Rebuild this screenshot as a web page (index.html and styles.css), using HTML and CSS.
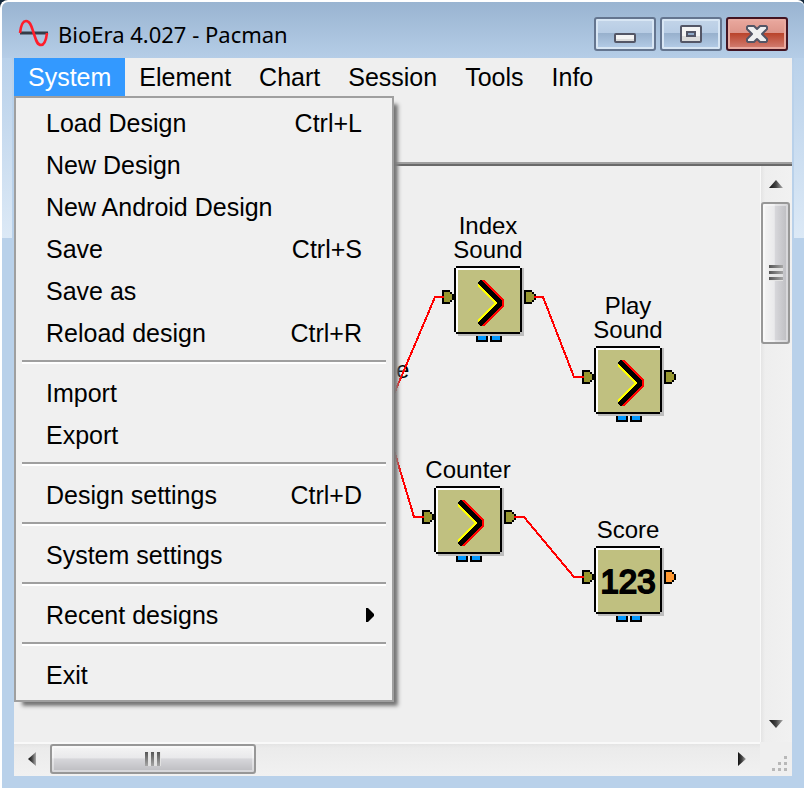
FILE: index.html
```html
<!DOCTYPE html>
<html lang="en">
<head>
<meta charset="utf-8">
<title>BioEra 4.027 - Pacman</title>
<link rel="stylesheet" href="styles.css">
</head>
<body>
<div class="window">
  <header class="titlebar">
    <svg class="logo" viewBox="0 0 32 30" aria-hidden="true">
      <path d="M2 14H30" stroke="#343c48" stroke-width="3"/>
      <path d="M2 14C3 5 5 2 8 2C13 2 14 10 16 15C18 21 19 26 23 26C26 26 28 22 29 14" fill="none" stroke="#ff1d2b" stroke-width="2.6"/>
    </svg>
    <h1 class="title">BioEra 4.027 - Pacman</h1>
    <div class="caption-buttons">
      <button class="caption" aria-label="Minimize">
        <svg viewBox="0 0 58 30"><rect x="19" y="15" width="20" height="8" rx="1" fill="#f4f4f4" stroke="#535666" stroke-width="2"/><path d="M20 20H38V22H20Z" fill="#dcdcdc"/></svg>
      </button>
      <button class="caption" aria-label="Maximize">
        <svg viewBox="0 0 58 30"><rect x="19" y="7" width="20" height="16" rx="1" fill="#f4f4f4" stroke="#535666" stroke-width="2"/><path d="M20 17H38V22H20Z" fill="#dcdcdc"/><rect x="25" y="13" width="8" height="4" fill="#8fa9c8" stroke="#535666" stroke-width="2"/></svg>
      </button>
      <button class="caption close" aria-label="Close">
        <svg viewBox="0 0 58 30"><path d="M20 7H26L29 10L32 7H38L39 8V10L34 15L39 20V22L38 23H32L29 20L26 23H20L19 22V20L24 15L19 10V8Z" fill="#f0f0f0" stroke="#535666" stroke-width="2" stroke-linejoin="round"/></svg>
      </button>
    </div>
  </header>

  <main class="client">
    <nav class="menubar">
      <div class="menu-holder">
        <button class="menu-title active" aria-expanded="true">System</button>
        <div class="menu">
          <button class="item"><span>Load Design</span><span>Ctrl+L</span></button>
          <button class="item"><span>New Design</span></button>
          <button class="item"><span>New Android Design</span></button>
          <button class="item"><span>Save</span><span>Ctrl+S</span></button>
          <button class="item"><span>Save as</span></button>
          <button class="item"><span>Reload design</span><span>Ctrl+R</span></button>
          <hr>
          <button class="item"><span>Import</span></button>
          <button class="item"><span>Export</span></button>
          <hr>
          <button class="item"><span>Design settings</span><span>Ctrl+D</span></button>
          <hr>
          <button class="item"><span>System settings</span></button>
          <hr>
          <button class="item submenu"><span>Recent designs</span><svg class="sub-arrow" viewBox="0 0 8 14"><path d="M0 0H2L8 6V8L2 14H0Z"/></svg></button>
          <hr>
          <button class="item"><span>Exit</span></button>
        </div>
      </div>
      <button class="menu-title">Element</button>
      <button class="menu-title">Chart</button>
      <button class="menu-title">Session</button>
      <button class="menu-title">Tools</button>
      <button class="menu-title">Info</button>
    </nav>
    <div class="toolbar"></div>

    <div class="workspace">
      <section class="canvas">
        <svg class="defs" aria-hidden="true">
          <defs>
            <g id="block" shape-rendering="crispEdges">
              <path d="M18 2H84V70H18Z" fill="#bdbdbd"/>
              <path d="M16 0H80V2H82V66H80V68H16V66H14V2H16Z" fill="#000"/>
              <path d="M16 2H80V66H16Z" fill="#fff"/>
              <path d="M18 4H80V66H18Z" fill="#c0c080"/>
              <path d="M36 70H48V76H36ZM50 70H62V76H50Z" fill="#000"/>
              <path d="M38 70H46V74H38ZM52 70H60V74H52Z" fill="#0098ff"/>
              <path d="M2 24H10V26H12V28H14V34H12V36H10V38H2Z" fill="#000"/>
              <path d="M4 26H10V28H12V34H10V36H4Z" fill="#989830"/>
              <path d="M84 24H92V26H94V28H96V34H94V36H92V38H84Z" fill="#000"/>
            </g>
            <path id="port" shape-rendering="crispEdges" d="M86 26H92V28H94V34H92V36H86Z"/>
            <g id="chevron" shape-rendering="crispEdges">
              <path d="M42 14H44L64 34V40L44 60H42L58 40V34Z" fill="#f00"/>
              <path d="M38 17V21L54 37L38 53V57L59 37Z" fill="#ff0"/>
              <path d="M40 14H42L62 35V39L42 60H40L38 58V56L57 37L38 18V16Z" fill="#000"/>
            </g>
          </defs>
        </svg>
        <span class="node-label hidden-end">e</span>
        <svg class="wires" aria-hidden="true">
          <path d="M430 131H421L380 228M520 131H529L560 211H570M380 284L400 351H410M500 351H510L560 411H570"/>
        </svg>
        <div class="node index-sound"><span class="node-label">Index Sound</span><svg class="art" viewBox="0 0 96 78"><use href="#block"/><use href="#port" fill="#989830"/><use href="#chevron"/></svg></div>
        <div class="node play-sound"><span class="node-label">Play Sound</span><svg class="art" viewBox="0 0 96 78"><use href="#block"/><use href="#port" fill="#989830"/><use href="#chevron"/></svg></div>
        <div class="node counter"><span class="node-label">Counter</span><svg class="art" viewBox="0 0 96 78"><use href="#block"/><use href="#port" fill="#989830"/><use href="#chevron"/></svg></div>
        <div class="node score"><span class="node-label">Score</span><svg class="art" viewBox="0 0 96 78"><use href="#block"/><use href="#port" fill="#ff9830"/><text class="digits" x="48" y="47">123</text></svg></div>
        <svg class="wires" aria-hidden="true">
          <path d="M428 131H430M520 131H522M568 211H570M408 351H410M500 351H502M568 411H570"/>
        </svg>
      </section>

      <div class="scroll vertical">
        <button class="arrow" aria-label="Scroll up"><svg class="wide-arrow" viewBox="0 0 14 8"><path d="M0 8L7 0L14 8Z" fill="url(#fade)"/></svg></button>
        <div class="thumb"><span class="grip"></span></div>
        <button class="arrow end" aria-label="Scroll down"><svg class="wide-arrow" viewBox="0 0 14 8"><path d="M0 0H14L7 8Z" fill="url(#fade)"/></svg></button>
      </div>
      <div class="scroll horizontal">
        <button class="arrow" aria-label="Scroll left"><svg class="tall-arrow" viewBox="0 0 8 14"><path d="M8 0V14L0 7Z" fill="url(#fade)"/></svg></button>
        <div class="thumb"><span class="grip"></span></div>
        <button class="arrow end" aria-label="Scroll right"><svg class="tall-arrow" viewBox="0 0 8 14"><path d="M0 0L8 7L0 14Z" fill="url(#fade)"/></svg></button>
      </div>
      <div class="corner">
        <svg class="resize" viewBox="0 0 16 16" fill="#b8b8b8"><defs><linearGradient id="fade"><stop stop-color="#111"/><stop offset="0.5" stop-color="#444"/><stop offset="1" stop-color="#aaa"/></linearGradient></defs><path d="M12 0h3v3h-3zM6 6h3v3h-3zM12 6h3v3h-3zM0 12h3v3h-3zM6 12h3v3h-3zM12 12h3v3h-3z"/></svg>
      </div>
    </div>
  </main>
</div>
</body>
</html>
```
FILE: styles.css
```css
* {
  box-sizing: border-box;
}

body {
  margin: 0;
  background: #14283c;
  font-family: "Liberation Sans", Arial, sans-serif;
  color: #000;
}

button {
  margin: 0;
  padding: 0;
  border: 0;
  background: none;
  font: inherit;
  color: inherit;
}

svg {
  display: block;
}

.window {
  min-height: 100vh;
  display: flex;
  flex-direction: column;
  padding: 0 12px 12px;
  border: solid #fff;
  border-width: 2px 0 0 2px;
  border-radius: 8px 6px 0 0;
  background:
    linear-gradient(#b9d1ea, #dce9f6) left 56px / 10px 180px no-repeat,
    linear-gradient(#b9d1ea, #dce9f6) right 56px / 10px 180px no-repeat,
    linear-gradient(#99b4d1, #b9d1ea 64px);
  background-color: #b9d1ea;
}

.titlebar {
  height: 56px;
  display: flex;
  align-items: center;
  padding: 8px 4px 0;
}

.logo {
  width: 32px;
  height: 30px;
}

.title {
  flex: 1;
  margin: 0 8px;
  font: 22px/32px "Noto Sans", "Open Sans", sans-serif;
  white-space: nowrap;
}

.caption-buttons {
  display: flex;
  gap: 4px;
}

.caption {
  width: 62px;
  height: 34px;
  border: 2px solid #64758f;
  border-radius: 3px;
  background: linear-gradient(#c3d5e9, #b7cce4 46%, #97b0cc 47%, #b5cde8);
  box-shadow: inset 0 0 0 2px #d8e6f4;
}

.caption.close {
  border-color: #431422;
  background: linear-gradient(#eaa99f, #dd958a 46%, #b9432a 47%, #d48176);
  box-shadow: inset 0 0 0 2px #e9aaa0;
}

.client {
  flex: 1;
  display: flex;
  flex-direction: column;
  background: #efefef;
}

.menubar {
  display: flex;
  font-size: 25px;
  line-height: 38px;
}

.menu-holder {
  position: relative;
}

.menu-title {
  display: block;
  height: 38px;
  padding: 0 14px;
}

.menu-title.active {
  background: #3399ff;
  color: #fff;
}

.menu {
  position: absolute;
  z-index: 5;
  top: 38px;
  left: 0;
  width: 380px;
  padding: 4px 0;
  border: 2px solid #9f9f9f;
  background: #f0f0f0;
  box-shadow: 6px 6px 3px -4px #757575, 6px 6px 4px -2px #8a8a8a;
}

.item {
  display: flex;
  justify-content: space-between;
  align-items: center;
  width: 100%;
  height: 42px;
  padding: 0 30px;
}

.submenu {
  padding-right: 18px;
}

.sub-arrow {
  width: 8px;
  height: 14px;
}

.menu hr {
  height: 4px;
  margin: 6px 6px 8px;
  border: 0;
  border-top: 2px solid #9f9f9f;
  background: #fff;
}

.toolbar {
  height: 70px;
  border-bottom: 2px solid #696969;
  box-shadow: inset 0 -2px #9f9f9f;
}

.workspace {
  flex: 1;
  display: grid;
  grid-template: 1fr 34px / 1fr 32px;
}

.canvas {
  position: relative;
  overflow: hidden;
  min-height: 576px;
}

.defs {
  position: absolute;
  width: 0;
  height: 0;
}

.wires {
  position: absolute;
  left: 0;
  top: 0;
  width: 100%;
  height: 100%;
  fill: none;
  stroke: #f00;
  stroke-width: 2px;
  shape-rendering: crispEdges;
}

.node {
  position: absolute;
  width: 96px;
}

.node-label {
  display: block;
  margin-bottom: 4px;
  font-size: 24px;
  line-height: 24px;
  text-align: center;
}

.hidden-end {
  position: absolute;
  left: 382px;
  top: 192px;
}

.art {
  width: 96px;
  height: 78px;
}

.digits {
  font: 33px "Liberation Sans", sans-serif;
  stroke: #000;
  stroke-width: 2px;
  text-anchor: middle;
}

.index-sound {
  left: 426px;
  top: 48px;
}

.play-sound {
  left: 566px;
  top: 128px;
}

.counter {
  left: 406px;
  top: 292px;
}

.score {
  left: 566px;
  top: 352px;
}

.scroll {
  display: flex;
}

.vertical {
  flex-direction: column;
  padding: 0 2px 0 0;
  border-left: 1px solid #f9f9f9;
  background: linear-gradient(90deg, #e4e4e4, #eee 4px, #f1f1f1);
}

.horizontal {
  padding: 0 0 2px;
  border-top: 2px solid #f9f9f9;
  background: linear-gradient(#e4e4e4, #ebebeb 4px, #f1f1f1);
}

.arrow {
  display: flex;
  align-items: center;
  justify-content: center;
  flex: 0 0 36px;
}

.arrow.end {
  margin-top: auto;
}

.horizontal .arrow.end {
  margin: 0 0 0 auto;
}

.wide-arrow {
  width: 14px;
  height: 8px;
}

.tall-arrow {
  width: 8px;
  height: 14px;
}

.thumb {
  display: flex;
  align-items: center;
  justify-content: center;
  border: 2px solid #979797;
  border-radius: 3px;
  box-shadow: inset 0 0 0 2px rgba(255, 255, 255, 0.4);
}

.vertical .thumb {
  height: 142px;
  background: linear-gradient(90deg, #f5f5f5, #e9e9eb 45%, #d6d6da 50%, #bcbcc0);
}

.horizontal .thumb {
  width: 206px;
  background: linear-gradient(#f5f5f5, #e9e9eb 45%, #d6d6da 50%, #bcbcc0);
}

.vertical .grip {
  width: 14px;
  height: 16px;
  background:
    linear-gradient(90deg, transparent, rgba(220, 220, 220, 0.6)),
    repeating-linear-gradient(#555 0 3px, #e8e8e8 3px 6px);
}

.horizontal .grip {
  width: 16px;
  height: 14px;
  background:
    linear-gradient(transparent, rgba(220, 220, 220, 0.6)),
    repeating-linear-gradient(90deg, #555 0 3px, #e8e8e8 3px 6px);
}

.corner {
  display: flex;
  align-items: flex-end;
  justify-content: flex-end;
  padding: 4px;
}

.resize {
  width: 16px;
  height: 16px;
}
```
